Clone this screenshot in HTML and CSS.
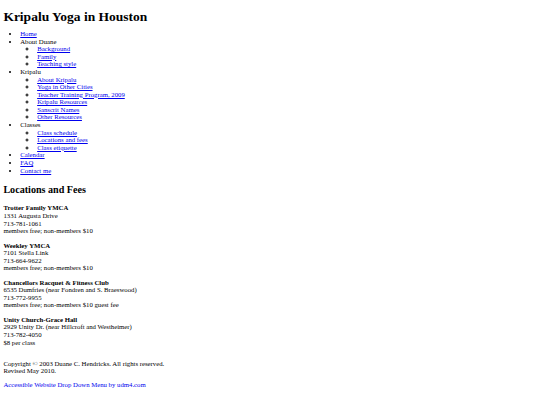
FILE: index.html
```html
<!DOCTYPE html>
<html>
<head>
<meta charset="utf-8">
<title>Kripalu Yoga in Houston - Locations and Fees</title>
<link rel="stylesheet" href="styles.css">
</head>
<body class="page">
<h1 class="title">Kripalu Yoga in Houston</h1>
<ul class="menu">
  <li><a href="#">Home</a></li>
  <li>About Duane
    <ul class="submenu">
      <li><a href="#">Background</a></li>
      <li><a href="#">Family</a></li>
      <li><a href="#">Teaching style</a></li>
    </ul>
  </li>
  <li>Kripalu
    <ul class="submenu">
      <li><a href="#">About Kripalu</a></li>
      <li><a href="#">Yoga in Other Cities</a></li>
      <li><a href="#">Teacher Training Program, 2009</a></li>
      <li><a href="#">Kripalu Resources</a></li>
      <li><a href="#">Sanscrit Names</a></li>
      <li><a href="#">Other Resources</a></li>
    </ul>
  </li>
  <li>Classes
    <ul class="submenu">
      <li><a href="#">Class schedule</a></li>
      <li><a href="#">Locations and fees</a></li>
      <li><a href="#">Class etiquette</a></li>
    </ul>
  </li>
  <li><a href="#">Calendar</a></li>
  <li><a href="#">FAQ</a></li>
  <li><a href="#">Contact me</a></li>
</ul>
<h2 class="heading">Locations and Fees</h2>
<p class="loc"><b>Trotter Family YMCA</b><br>1331 Augusta Drive<br>713-781-1061<br>members free; non-members $10</p>
<p class="loc"><b>Weekley YMCA</b><br>7101 Stella Link<br>713-664-9622<br>members free; non-members $10</p>
<p class="loc"><b>Chancellors Racquet &amp; Fitness Club</b><br>6535 Dumfries (near Fondren and S. Braeswood)<br>713-772-9955<br>members free; non-members $10 guest fee</p>
<p class="loc"><b>Unity Church-Grace Hall</b><br>2929 Unity Dr. (near Hillcroft and Westheimer)<br>713-782-4050<br>$8 per class</p>
<p class="copy">Copyright &copy; 2003 Duane C. Hendricks. All rights reserved.<br>Revised May 2010.</p>
<p class="credit"><a href="#">Accessible Website Drop Down Menu by udm4.com</a></p>
</body>
</html>
```

FILE: styles.css
```css
html { background: #fff; }
.page {
  margin: 0 3.375px;
  font-family: "Liberation Serif", "Times New Roman", serif;
  font-size: 6.75px;
  line-height: 7.59px;
  color: #000;
}
.page a { color: #0000ee; }
.title {
  font-size: 13.5px;
  line-height: 15.6px;
  margin: 9.05px 0 5.3px;
}
.menu {
  margin: 0;
  padding-left: 16.875px;
  list-style: disc;
}
.submenu {
  margin: 0;
  padding-left: 16.875px;
  list-style: circle;
}
.heading {
  font-size: 10.125px;
  line-height: 11.8px;
  margin: 10px 0 8.4px;
}
.loc {
  margin: 0 0 6.75px;
}
.copy {
  margin: 13.7px 0 5.8px;
}
.credit {
  margin: 0;
}
```
